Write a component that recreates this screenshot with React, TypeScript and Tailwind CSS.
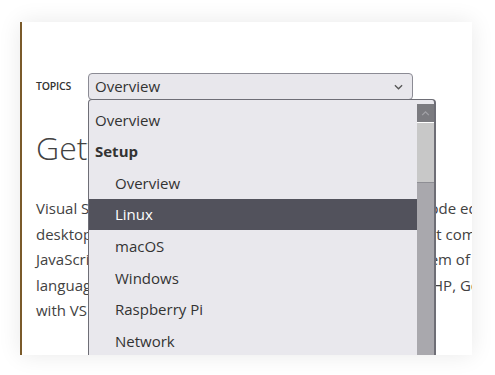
const items: { label: string; indent?: boolean; bold?: boolean; active?: boolean }[] = [
  { label: 'Overview' },
  { label: 'Setup', bold: true },
  { label: 'Overview', indent: true },
  { label: 'Linux', indent: true, active: true },
  { label: 'macOS', indent: true },
  { label: 'Windows', indent: true },
  { label: 'Raspberry Pi', indent: true },
  { label: 'Network', indent: true },
];

function Chevron({ className }: { className?: string }) {
  return (
    <svg viewBox="0 0 10 6" className={className} fill="none" stroke="currentColor" strokeWidth="1.4">
      <path d="M1 1l4 4 4-4" />
    </svg>
  );
}

export default function App() {
  return (
    <div className="h-[375px] w-[495px] overflow-hidden bg-white pl-5 pt-[22px] font-['Open_Sans',sans-serif] text-[#424242]">
      <div className="relative h-[333px] w-[452px] overflow-hidden border-l-2 border-[#7a5a2a] bg-white pl-[14px] pt-[51px] shadow-[0_0_22px_rgba(0,0,0,0.09)]">
        <div className="flex items-center">
          <span className="w-[52px] text-[10.5px] font-semibold tracking-[-0.2px] text-[#333]">TOPICS</span>
          <div className="relative">
            <div className="flex h-[27px] w-[325px] items-center justify-between rounded-[4px] border border-[#8b8b94] bg-[#e8e7ec] pl-[6px] pr-[9px] text-[15px] text-[#333]">
              <span>Overview</span>
              <Chevron className="h-[6px] w-[9px] text-[#555]" />
            </div>
            <div className="absolute left-0 top-[26px] z-10 flex h-[260px] w-[348px] rounded-t-[4px] border border-r-2 border-[#6e6e76] border-b-0 bg-[#e9e8ed] pt-[4px]">
              <ul className="flex-1">
                {items.map((it, i) => (
                  <li
                    key={i}
                    className={`flex h-[31.6px] items-center text-[15px] ${it.indent ? 'pl-[26px]' : 'pl-[6px]'} ${
                      it.bold ? 'font-bold' : ''
                    } ${it.active ? 'bg-[#52525c] text-white' : 'text-[#333]'}`}
                  >
                    {it.label}
                  </li>
                ))}
              </ul>
              <div className="flex w-[17px] flex-col bg-[#a9a8ad]">
                <div className="flex h-[18px] items-center justify-center bg-[#7b7b80]">
                  <Chevron className="h-[5px] w-[9px] rotate-180 text-[#a3a3a8]" />
                </div>
                <div className="h-[61px] border-y border-t-white border-b-[#8e8e94] bg-[#c8c8c8]" />
              </div>
            </div>
          </div>
        </div>

        <div className="w-[700px]">
          <h1 className="mt-[28px] text-[32px] font-light leading-[40px] text-[#424242]">Getting Started</h1>
          <p className="mt-[28px] text-[15px] leading-[25.6px] text-[#424242]">
            Visual Studio Code is a lightweight but powerful source code editor which runs on your
            <br />
            desktop and is available for Windows, macOS and Linux. It comes with built-in support for
            <br />
            JavaScript, TypeScript and Node.js and has a rich ecosystem of extensions for other
            <br />
            languages and runtimes (such as C++, C#, Java, Python, PHP, Go, .NET). Begin your journey
            <br />
            with VS Code with these introductory videos.
          </p>
        </div>
      </div>
    </div>
  );
}
